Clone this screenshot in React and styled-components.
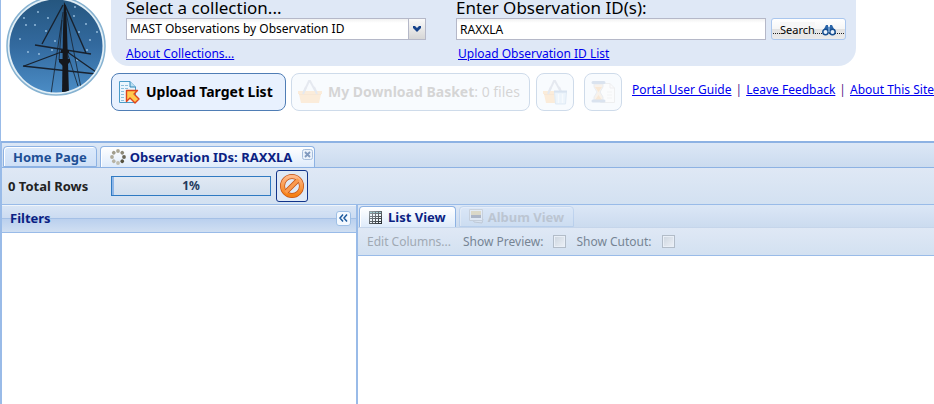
import React from "react";
import styled, { createGlobalStyle, css } from "styled-components";

const GlobalStyle = createGlobalStyle`
  * { box-sizing: border-box; }
  html, body, #root { height: 100%; }
  body {
    margin: 0;
    overflow: hidden;
    background: #fff;
    color: #000;
    font: 12px/16px "Noto Sans", Tahoma, sans-serif;
  }
  button, input, select { font: inherit; color: inherit; margin: 0; }
  svg { display: block; flex: none; }
`;

const Page = styled.div`
  height: 100%;
  display: flex;
  flex-direction: column;
  border-left: 1px solid #99bbe8;
`;

const Masthead = styled.header`
  display: flex;
  gap: 5px;
  padding-left: 5px;
  height: 141px;
  flex: none;
`;

const MastheadBody = styled.div`
  flex: 1;
  min-width: 0;
`;

const SearchBand = styled.form`
  display: flex;
  width: 745px;
  height: 66px;
  padding: 0 10px 0 15px;
  background: #dfe8f6;
  border-radius: 0 0 18px 18px;
`;

const Field = styled.div`
  display: flex;
  flex-direction: column;
  align-items: flex-start;
  width: ${(p) => p.$width};
  margin-right: ${(p) => p.$gap};
`;

const FieldLabel = styled.label`
  font-size: 17px;
  line-height: 16px;
  height: 18px;
  white-space: nowrap;
`;

const boxStyle = css`
  width: 100%;
  height: 22px;
  border: 1px solid #b5b8c8;
  border-radius: 0;
  background: linear-gradient(#f1f1f1, #fff 4px);
  padding: 0 3px;
  outline: none;
`;

const TextBox = styled.input`
  ${boxStyle}
`;

const SelectWrap = styled.div`
  display: flex;
  position: relative;
  width: 100%;
`;

const Select = styled.select`
  ${boxStyle}
  appearance: none;
`;

const SelectArrow = styled.span`
  position: absolute;
  right: 1px;
  top: 1px;
  width: 17px;
  height: 20px;
  display: flex;
  align-items: center;
  justify-content: center;
  border-left: 1px solid #b5b8c8;
  background: linear-gradient(#fafafa, #d6d6d6);
  pointer-events: none;
`;

const Link = styled.a`
  color: #0000ee;
  white-space: nowrap;
  text-decoration: underline;
`;

const FieldLink = styled(Link)`
  margin: 6px 0 0 ${(p) => p.$indent || "0"};
`;

const SearchButton = styled.button`
  display: flex;
  align-items: center;
  justify-content: space-between;
  width: 75px;
  height: 22px;
  margin-top: 18px;
  padding: 2px 9px 0 8px;
  border: 1px solid #a9c6ee;
  border-radius: 3px;
  background:
    repeating-linear-gradient(90deg, #222 0 1px, transparent 1px 2px) 1px 14px / 71px 1px no-repeat,
    linear-gradient(#fff, #f6f6f6 48%, #e2e2e2 52%, #ebebeb);
  font-size: 11px;
  line-height: 16px;
`;

const SearchText = styled.span`
  background: linear-gradient(#f6f6f6 48%, #e7e7e7 52%);
`;

const Actions = styled.nav`
  display: flex;
  align-items: flex-start;
  margin-top: 7px;
`;

const ActionButton = styled.button`
  display: flex;
  align-items: center;
  justify-content: ${(p) => (p.$square ? "center" : "flex-start")};
  gap: 5px;
  flex: none;
  width: ${(p) => p.$width};
  height: 38px;
  margin-right: ${(p) => p.$gap};
  padding: 0 ${(p) => (p.$square ? "0" : "5px")};
  border: 1px solid #4f7db5;
  border-radius: 8px;
  background: #e8f1fe;
  font-size: 14px;
  font-weight: 700;
  white-space: nowrap;
  &:disabled { opacity: 0.27; color: #666; }
  &:disabled svg { opacity: 0.7; }
  span { font-weight: 400; }
`;

const SiteLinks = styled.div`
  display: flex;
  gap: 4px;
  padding-top: 9px;
  white-space: nowrap;
`;

const Divider = styled.span`
  color: #551a8b;
`;

const Workspace = styled.main`
  flex: 1;
  min-height: 0;
  display: flex;
  flex-direction: column;
  border-top: 2px solid #8db2e3;
  padding-left: 1px;
  background: #99bbe8;
`;

const TabStrip = styled.div`
  display: flex;
  gap: 3px;
  align-items: flex-end;
  flex: none;
  height: ${(p) => p.$height};
  padding: 0 1px;
  background: linear-gradient(#dce7f6, #cbdbef);
  border-bottom: 1px solid ${(p) => p.$edge};
`;

const Tab = styled.button`
  display: flex;
  align-items: center;
  gap: ${(p) => p.$gap || "4px"};
  height: 21px;
  padding: 0 9px;
  border: 1px solid #8db2e3;
  border-bottom-width: ${(p) => (p.$active ? "0" : "1px")};
  border-radius: 4px 4px 0 0;
  box-shadow: inset 1px 1px #fff;
  background: ${(p) => (p.$active ? "linear-gradient(#fff, #deebfb)" : "linear-gradient(#dceafc, #cfe0f6)")};
  color: ${(p) => (p.$active ? "#0b1f83" : "#1d4f95")};
  font-size: 13px;
  font-weight: 700;
  white-space: nowrap;
  &:disabled { opacity: 0.3; color: #888; }
`;

const TabClose = styled.span`
  display: flex;
  margin: 0 -8px 5px 6px;
`;

const StatusBar = styled.div`
  display: flex;
  align-items: center;
  flex: none;
  height: 36px;
  padding-left: 6px;
  background: linear-gradient(#dfe8f5, #d3e1f1);
`;

const RowCount = styled.strong`
  width: 103px;
  font-size: 13px;
  color: #222;
`;

const Progress = styled.div`
  width: 160px;
  height: 20px;
  margin-right: 5px;
  border: 1px solid #2f7ac2;
  background: linear-gradient(90deg, #8db6e8 2px, transparent 2px), linear-gradient(#e0e8f3, #d2dfee);
  color: #23395c;
  font-size: 12px;
  line-height: 18px;
  font-weight: 700;
  text-align: center;
`;

const StopButton = styled.button`
  display: flex;
  align-items: center;
  justify-content: center;
  width: 32px;
  height: 32px;
  padding: 0;
  border: 1px solid #12348a;
  border-radius: 3px;
  background: #dfe9f6;
`;

const Panes = styled.div`
  flex: 1;
  min-height: 0;
  display: grid;
  grid-template-columns: 354px 1fr;
  gap: 2px;
  padding-top: 1px;
`;

const Pane = styled.section`
  display: flex;
  flex-direction: column;
  background: #fff;
  min-width: 0;
`;

const FilterHeader = styled.header`
  display: flex;
  align-items: center;
  justify-content: space-between;
  height: 28px;
  padding: 0 5px 2px 8px;
  border-top: 1px solid #f0f5fb;
  border-bottom: 1px solid #99bbe8;
  background: linear-gradient(#d9e5f5, #cbdbf1 12px, #a4c0e6 12px 13px, #bad0ee 13px, #d0dff2);
`;

const PaneTitle = styled.h2`
  margin: 0;
  font-size: 13px;
  line-height: 16px;
  color: #0b1f83;
`;

const CollapseButton = styled.button`
  display: flex;
  align-items: center;
  justify-content: center;
  width: 15px;
  height: 15px;
  padding: 0;
  border: 1px solid #9ebfe5;
  border-radius: 3px;
  background: #f4f9ff;
`;

const ViewToolbar = styled.div`
  display: flex;
  align-items: center;
  height: 28px;
  padding-left: 9px;
  border-bottom: 1px solid #99bbe8;
  background: linear-gradient(#dfe8f5, #d3e1f1);
  color: #768494;
  white-space: nowrap;
`;

const PlainButton = styled.button`
  padding: 0;
  margin-right: 12px;
  border: 0;
  background: none;
  &:disabled { color: #a0a9b3; }
`;

const CheckLabel = styled.label`
  display: flex;
  align-items: center;
  gap: 10px;
  margin-right: 10px;
`;

const CheckBox = styled.input`
  appearance: none;
  width: 13px;
  height: 13px;
  border: 1px solid #b2bcc8;
  background: linear-gradient(135deg, #ccd5df, #edf1f7);
  box-shadow: inset 0 0 0 1px #e9eff7;
`;

const stars = [[24, 18], [38, 12], [48, 18], [46, 31], [20, 39], [39, 54], [28, 52], [74, 16], [86, 24], [90, 40], [87, 50], [79, 32], [35, 25], [77, 60], [55, 41], [26, 25], [75, 7], [97, 32], [52, 50]];

const MastLogo = () => (
  <svg width="100" height="96" viewBox="6 0 100 96" role="img" aria-label="MAST">
    <defs>
      <linearGradient id="sky" x1="0" y1="0" x2="0" y2="1">
        <stop offset="0" stopColor="#25567f" />
        <stop offset="0.5" stopColor="#336a9f" />
        <stop offset="1" stopColor="#4b8cc5" />
      </linearGradient>
      <clipPath id="disc"><circle cx="56" cy="46" r="46.500" /></clipPath>
    </defs>
    <circle cx="56" cy="46" r="49" fill="#e2eff6" stroke="#86b2d1" strokeWidth="1.500" />
    <circle cx="56" cy="46" r="46.500" fill="url(#sky)" />
    <g clipPath="url(#disc)">
      {stars.map(([x, y]) => <circle key={`${x}-${y}`} cx={x} cy={y} r="0.9" fill="#9fc4e2" />)}
      <g stroke="#18222f" fill="none">
        <path d="M63 5 42 44M65 5 86 53M35 45 91 54M23 66 96 74" strokeWidth="1.400" />
        <path d="M64 51 24 66M66 51 96 72" strokeWidth="1.300" />
        <path d="M63 12 51 94M62 20 59 60M66 12 81 88M67 52 78 86" strokeWidth="0.800" />
      </g>
      <path d="M64 2 66 6 67 30 69 95H62L63 30Z" fill="#15171c" />
      <path d="M59 59H70V62L66 66H63L59 62ZM61 50H69V53H61Z" fill="#15171c" />
    </g>
  </svg>
);

const UploadIcon = () => (
  <svg width="24" height="24" viewBox="0 0 24 24">
    <path d="M2.500 1.500H13L18.500 7V22.500H2.500Z" fill="#eaf6fd" stroke="#4b9cc8" />
    <path d="M13 1.500V7H18.500" fill="#b9def2" stroke="#2d86b8" />
    <path d="M4 5.500H7M8 5.500H11M4 8.500H7M8 8.500H11M4 11.500H7M4 14.500H7M4 17.500H7M4 20.500H7" stroke="#8dbfdc" />
    <path d="M9.500 10.500H20.500L17 14 22 19 18 23 13 18 9.500 21.500Z" fill="#ffc94d" stroke="#e0431b" strokeWidth="1.400" strokeLinejoin="round" />
  </svg>
);

const BasketIcon = ({ trash }) => (
  <svg width="26" height="26" viewBox="0 0 26 26">
    <path d="M6 15 12 2 13 2 20 15" fill="none" stroke="#8795b4" strokeWidth="2" />
    <path d="M1 12H25V15H24L22 24H4L2 15H1Z" fill="#f5a742" />
    <path d="M2 15.500H24" stroke="#e08c2c" />
    <path d="M6 15 9 8M20 15 17 8" stroke="#8795b4" strokeWidth="2" />
    {trash && (
      <g>
        <path d="M12.500 13H24.500L23.500 25H13.500Z" fill="#a7cdf0" stroke="#6ca0d0" />
        <path d="M12 12.500H25" stroke="#4279b4" strokeWidth="2" />
        <path d="M16.500 15V24M20.500 15V24" stroke="#dcecfb" strokeWidth="1.500" />
      </g>
    )}
  </svg>
);

const HourglassIcon = () => (
  <svg width="26" height="26" viewBox="0 0 26 26">
    <path d="M10.500 4.500H20L24.500 9V23.500H10.500Z" fill="#fafafa" stroke="#b4b4b4" />
    <path d="M20 4.500V9H24.500" fill="none" stroke="#b4b4b4" />
    <path d="M17 13H22M17 16H22M17 19H22" stroke="#cfcfcf" />
    <path d="M4 5H13V8L10 13 13 18V21H4V18L7 13 4 8Z" fill="#e7c79c" stroke="#9aa9bd" />
    <path d="M5 8H12L8.500 13ZM5 21 8.500 16 12 21Z" fill="#e8902e" />
    <path d="M3 3.500H14M3 22H14" stroke="#4978b2" strokeWidth="3" strokeLinecap="round" />
  </svg>
);

const BinocularsIcon = () => (
  <svg width="14" height="12" viewBox="0 0 14 12">
    <path d="M4 1H6V3H8V1H10L13 7H1Z" fill="#2b65a8" />
    <circle cx="3.500" cy="8" r="2.700" fill="#e9f2fc" stroke="#174f91" strokeWidth="1.500" />
    <circle cx="10.500" cy="8" r="2.700" fill="#e9f2fc" stroke="#174f91" strokeWidth="1.500" />
    <path d="M7 2V8" stroke="#9ec3ea" />
  </svg>
);

const dots = ["#aaa695", "#8b8878", "#6b6757", "#55513e", "#c0bdae", "#b7b3a4", "#aeaa9a", "#a19d8c"];

const Spinner = () => (
  <svg width="16" height="16" viewBox="0 0 16 16">
    {dots.map((fill, i) => (
      <circle key={fill} cx="8" cy="2" r="1.900" fill={fill} transform={`rotate(${i * 45} 8 8)`} />
    ))}
  </svg>
);

const CloseIcon = () => (
  <svg width="11" height="11" viewBox="0 0 11 11">
    <rect x="0.500" y="0.500" width="10" height="10" rx="2" fill="#eaf2fb" stroke="#a6bddb" />
    <path d="M3 3 8 8M8 3 3 8" stroke="#8099bd" strokeWidth="1.800" />
  </svg>
);

const StopIcon = () => (
  <svg width="26" height="26" viewBox="0 0 26 26">
    <defs>
      <linearGradient id="stop" x1="0" y1="0" x2="0" y2="1">
        <stop offset="0" stopColor="#ffb98a" />
        <stop offset="1" stopColor="#f57f12" />
      </linearGradient>
    </defs>
    <circle cx="13" cy="13" r="9.500" fill="none" stroke="#c4500f" strokeWidth="5" />
    <path d="M7 19 19 7" stroke="#c4500f" strokeWidth="5" />
    <circle cx="13" cy="13" r="9.500" fill="none" stroke="url(#stop)" strokeWidth="3.600" />
    <path d="M6.500 19.500 19.500 6.500" stroke="#fa9a4e" strokeWidth="3.400" />
  </svg>
);

const ListIcon = () => (
  <svg width="13" height="13" viewBox="0 0 13 13">
    <defs>
      <linearGradient id="grid" x1="0" y1="0" x2="1" y2="1">
        <stop offset="0" stopColor="#9aa3aa" />
        <stop offset="1" stopColor="#24282c" />
      </linearGradient>
    </defs>
    <path d="M0 0H13V13H0Z" fill="url(#grid)" />
    <path d="M1 1H3V2H1ZM4 1H6V2H4ZM7 1H9V2H7ZM10 1H12V2H10Z" fill="#9ccbd0" />
    <path d="M1 3H3V5H1ZM4 3H6V5H4ZM7 3H9V5H7ZM10 3H12V5H10ZM1 6H3V7H1ZM4 6H6V7H4ZM7 6H9V7H7ZM10 6H12V7H10ZM1 8H3V10H1ZM4 8H6V10H4ZM7 8H9V10H7ZM10 8H12V10H10ZM1 11H3V12H1ZM4 11H6V12H4ZM7 11H9V12H7ZM10 11H12V12H10Z" fill="#eef5fa" />
  </svg>
);

const AlbumIcon = () => (
  <svg width="15" height="15" viewBox="0 0 15 15">
    <path d="M3 8 14 10 13 14 5 13Z" fill="#eee" stroke="#999" />
    <path d="M.5 .5H13.500V11.500H.5Z" fill="#fff" stroke="#aaa" />
    <path d="M2 2H12V6H2Z" fill="#e8c36a" />
    <path d="M2 6H12V9H2Z" fill="#556" />
  </svg>
);

export default function App() {
  return (
    <Page>
      <GlobalStyle />
      <Masthead>
        <MastLogo />
        <MastheadBody>
          <SearchBand onSubmit={(e) => e.preventDefault()}>
            <Field $width="300px" $gap="30px">
              <FieldLabel htmlFor="collection">Select a collection...</FieldLabel>
              <SelectWrap>
                <Select id="collection">
                  <option>MAST Observations by Observation ID</option>
                </Select>
                <SelectArrow>
                  <svg width="8" height="6" viewBox="0 0 8 6">
                    <path d="M0 0H2L4 2 6 0H8V2L4 6 0 2Z" fill="#15428b" />
                  </svg>
                </SelectArrow>
              </SelectWrap>
              <FieldLink href="#collections">About Collections...</FieldLink>
            </Field>
            <Field $width="310px" $gap="5px">
              <FieldLabel htmlFor="observation">Enter Observation ID(s):</FieldLabel>
              <TextBox id="observation" defaultValue="RAXXLA" />
              <FieldLink href="#upload" $indent="2px">Upload Observation ID List</FieldLink>
            </Field>
            <SearchButton type="submit">
              <SearchText>Search</SearchText>
              <BinocularsIcon />
            </SearchButton>
          </SearchBand>
          <Actions>
            <ActionButton $width="175px" $gap="5px"><UploadIcon />Upload Target List</ActionButton>
            <ActionButton $width="239px" $gap="6px" disabled>
              <BasketIcon />
              <div>My Download Basket<span>: 0 files</span></div>
            </ActionButton>
            <ActionButton $width="38px" $gap="10px" $square disabled aria-label="Empty basket"><BasketIcon trash /></ActionButton>
            <ActionButton $width="38px" $gap="10px" $square disabled aria-label="Job history"><HourglassIcon /></ActionButton>
            <SiteLinks>
              <Link href="#guide">Portal User Guide</Link>
              <Divider>|</Divider>
              <Link href="#feedback">Leave Feedback</Link>
              <Divider>|</Divider>
              <Link href="#about">About This Site</Link>
            </SiteLinks>
          </Actions>
        </MastheadBody>
      </Masthead>
      <Workspace>
        <TabStrip $height="25px" $edge="#8db2e3">
          <Tab>Home Page</Tab>
          <Tab $active>
            <Spinner />Observation IDs: RAXXLA
            <TabClose><CloseIcon /></TabClose>
          </Tab>
        </TabStrip>
        <StatusBar>
          <RowCount>0 Total Rows</RowCount>
          <Progress role="progressbar" aria-valuenow={1} aria-label="Loading">1%</Progress>
          <StopButton aria-label="Stop"><StopIcon /></StopButton>
        </StatusBar>
        <Panes>
          <Pane>
            <FilterHeader>
              <PaneTitle>Filters</PaneTitle>
              <CollapseButton aria-label="Collapse filters">
                <svg width="9" height="8" viewBox="0 0 9 8">
                  <path d="M4 .5 1 4 4 7.500M8 .5 5 4 8 7.500" fill="none" stroke="#1d5a9e" strokeWidth="1.500" />
                </svg>
              </CollapseButton>
            </FilterHeader>
          </Pane>
          <Pane>
            <TabStrip $height="23px" $edge="#c5d5ea">
              <Tab $active $gap="6px"><ListIcon />List View</Tab>
              <Tab disabled><AlbumIcon />Album View</Tab>
            </TabStrip>
            <ViewToolbar>
              <PlainButton disabled>Edit Columns...</PlainButton>
              <CheckLabel>Show Preview:<CheckBox type="checkbox" disabled /></CheckLabel>
              <CheckLabel>Show Cutout:<CheckBox type="checkbox" disabled /></CheckLabel>
            </ViewToolbar>
          </Pane>
        </Panes>
      </Workspace>
    </Page>
  );
}
